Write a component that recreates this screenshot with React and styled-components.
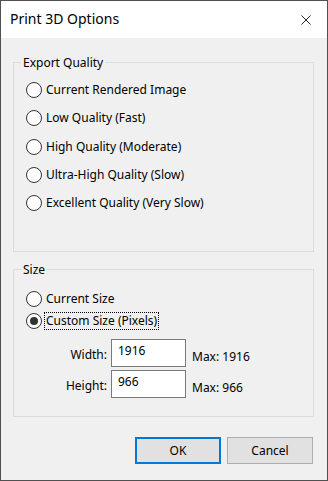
import React from 'react'
import styled, { createGlobalStyle } from 'styled-components'

const GlobalStyle = createGlobalStyle`
  html, body {
    margin: 0;
    padding: 0;
    background: #f0f0f0;
  }
  body {
    font-family: "Noto Sans", "Open Sans", sans-serif;
    font-size: 12px;
    color: #000;
  }
`

const Window = styled.div`
  width: 328px;
  height: 481px;
  box-sizing: border-box;
  border: 1px solid #505050;
  background: #f0f0f0;
  display: flex;
  flex-direction: column;
`

const TitleBar = styled.div`
  height: 37px;
  background: #fff;
  display: flex;
  align-items: center;
  justify-content: space-between;
  padding: 0 16px 0 9px;
  font-size: 14px;
  flex-shrink: 0;
`

const Title = styled.span`
  line-height: 1;
  margin-top: -1px;
`

const CloseIcon = styled.svg`
  width: 10px;
  height: 10px;
  display: block;
`

const Content = styled.div`
  flex: 1;
  display: flex;
  flex-direction: column;
  padding: 24px 13px 16px 12px;
`

const Group = styled.div`
  position: relative;
  border: 1px solid #dcdcdc;
  height: ${p => p.$height}px;
  box-sizing: border-box;
  margin-top: ${p => p.$top || 0}px;
  padding: ${p => p.$padTop}px 12px 0 12px;
  display: flex;
  flex-direction: column;
`

const Legend = styled.span`
  position: absolute;
  top: -9px;
  left: 7px;
  padding: 0 2px;
  background: #f0f0f0;
  line-height: 17px;
`

const RadioRow = styled.label`
  display: flex;
  align-items: center;
  gap: 3px;
  height: 16px;
  margin-top: ${p => p.$gap || 0}px;
  white-space: nowrap;
`

const Circle = styled.span`
  width: 16px;
  height: 16px;
  box-sizing: border-box;
  border-radius: 50%;
  border: 1px solid #333;
  background: #fff;
  display: flex;
  align-items: center;
  justify-content: center;
  flex-shrink: 0;
  &::after {
    content: '';
    display: ${p => (p.$checked ? 'block' : 'none')};
    width: 8px;
    height: 8px;
    border-radius: 50%;
    background: #333;
  }
`

const RadioText = styled.span`
  padding: 0 1px;
  line-height: 16px;
  outline: ${p => (p.$focus ? '1px dotted #000' : 'none')};
`

const SizeGrid = styled.div`
  display: grid;
  grid-template-columns: 81px 75px auto;
  column-gap: 4px;
  row-gap: 3px;
  margin-top: 10px;
  align-items: center;
`

const FieldLabel = styled.span`
  text-align: right;
  margin-top: 3px;
`

const Input = styled.div`
  height: 28px;
  box-sizing: border-box;
  border: 1px solid #7a7a7a;
  background: #fff;
  padding: 2px 6px;
  line-height: 17px;
`

const MaxText = styled.span`
  margin-left: 2px;
  margin-top: 6px;
`

const Buttons = styled.div`
  margin-top: auto;
  margin-right: 1px;
  display: flex;
  justify-content: flex-end;
  gap: 6px;
`

const Button = styled.button`
  width: 86px;
  height: 27px;
  box-sizing: border-box;
  background: #e1e1e1;
  border: ${p => (p.$primary ? '2px solid #0078d7' : '1px solid #adadad')};
  font-family: inherit;
  font-size: 12px;
  color: #000;
  padding: 0;
`

const qualities = [
  { text: 'Current Rendered Image', gap: 0 },
  { text: 'Low Quality (Fast)', gap: 12 },
  { text: 'High Quality (Moderate)', gap: 13 },
  { text: 'Ultra-High Quality (Slow)', gap: 12 },
  { text: 'Excellent Quality (Very Slow)', gap: 12 },
]

const Radio = ({ text, gap, checked, focus }) => (
  <RadioRow $gap={gap}>
    <Circle $checked={checked} />
    <RadioText $focus={focus}>{text}</RadioText>
  </RadioRow>
)

export default function App() {
  return (
    <Window>
      <GlobalStyle />
      <TitleBar>
        <Title>Print 3D Options</Title>
        <CloseIcon viewBox="0 0 10 10">
          <path d="M0.5 0.5 L9.5 9.5 M9.5 0.5 L0.5 9.5" stroke="#222" strokeWidth="1" fill="none" />
        </CloseIcon>
      </TitleBar>
      <Content>
        <Group $height={190} $padTop={19}>
          <Legend>Export Quality</Legend>
          {qualities.map(q => (
            <Radio key={q.text} text={q.text} gap={q.gap} />
          ))}
        </Group>
        <Group $height={148} $top={17} $padTop={21}>
          <Legend>Size</Legend>
          <Radio text="Current Size" />
          <Radio text="Custom Size (Pixels)" gap={6} checked focus />
          <SizeGrid>
            <FieldLabel>Width:</FieldLabel>
            <Input>1916</Input>
            <MaxText>Max: 1916</MaxText>
            <FieldLabel>Height:</FieldLabel>
            <Input>966</Input>
            <MaxText>Max: 966</MaxText>
          </SizeGrid>
        </Group>
        <Buttons>
          <Button $primary>OK</Button>
          <Button>Cancel</Button>
        </Buttons>
      </Content>
    </Window>
  )
}
